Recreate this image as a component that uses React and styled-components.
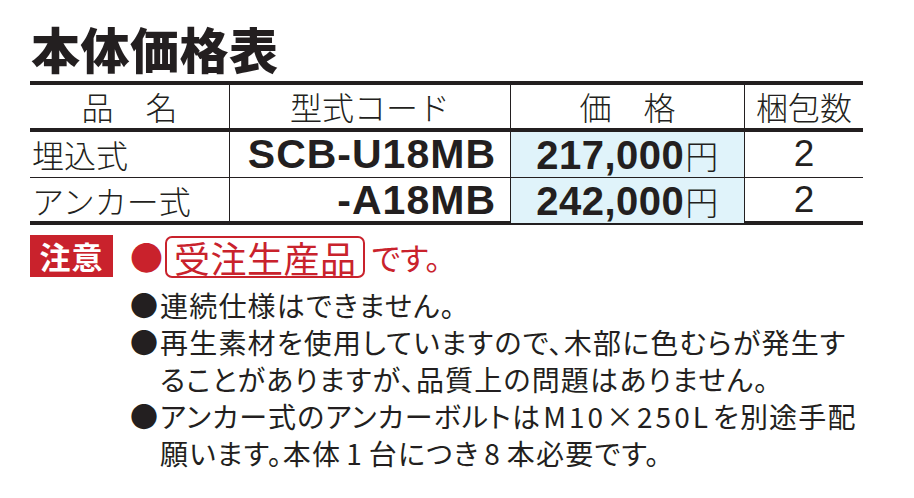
import React from "react";
import styled, { createGlobalStyle } from "styled-components";

const GlobalStyle = createGlobalStyle`
  html, body { margin: 0; padding: 0; background: #ffffff; }
  body {
    font-family: "Noto Sans CJK JP", "Noto Sans", sans-serif;
    color: #231f20;
  }
`;

const INK = "#231f20";
const RED = "#c9222c";

const Page = styled.div`
  width: 914px;
  height: 498px;
  box-sizing: border-box;
  padding: 22px 0 0 30px;
  overflow: hidden;
`;

const Title = styled.h1`
  margin: 0 0 0 1px;
  font-size: 49px;
  line-height: 52px;
  font-weight: 900;
  letter-spacing: 0.5px;
  color: ${INK};
`;

const Table = styled.div`
  margin-top: 7px;
  width: 833px;
  border-top: 4px solid ${INK};
  border-bottom: 4px solid ${INK};
`;

const Row = styled.div`
  display: grid;
  grid-template-columns: 199px 281px 234px 119px;
  height: ${(p) => p.$h}px;
  border-bottom: ${(p) => p.$rule}px solid ${INK};
  box-sizing: content-box;
`;

const Cell = styled.div`
  box-sizing: border-box;
  display: flex;
  align-items: center;
  justify-content: ${(p) => p.$align || "center"};
  border-left: ${(p) => (p.$first ? "none" : `1px solid ${INK}`)};
  background: ${(p) => (p.$tint ? "#e0f3fa" : "transparent")};
  padding: ${(p) => p.$pad || "0"};
  white-space: nowrap;
`;

const HeadText = styled.span`
  font-size: 32px;
  font-weight: 300;
  line-height: 1.2;
`;

const NameText = styled.span`
  font-size: 32px;
  font-weight: 300;
  line-height: 1.2;
`;

const CodeText = styled.span`
  font-family: "Liberation Sans", Arial, sans-serif;
  font-weight: 700;
  font-size: 41px;
  letter-spacing: 1px;
  line-height: 1.1;
`;

const PriceText = styled.span`
  font-family: "Liberation Sans", Arial, sans-serif;
  font-weight: 700;
  font-size: 40px;
  letter-spacing: 0.5px;
  line-height: 1.1;
  display: flex;
  align-items: baseline;
`;

const Yen = styled.span`
  font-family: "Noto Sans CJK JP", sans-serif;
  font-weight: 300;
  font-size: 33px;
  margin-left: 1px;
`;

const QtyText = styled.span`
  font-family: "Liberation Sans", Arial, sans-serif;
  font-size: 37px;
  line-height: 1.1;
`;

const Notes = styled.div`
  margin-top: 10px;
  display: flex;
  align-items: flex-start;
  gap: 17px;
`;

const Label = styled.div`
  width: 83px;
  height: 42px;
  background: ${RED};
  color: #ffffff;
  font-size: 31px;
  font-weight: 700;
  line-height: 42px;
  text-align: center;
  letter-spacing: 1px;
`;

const NoteBody = styled.div`
  display: flex;
  flex-direction: column;
`;

const Headline = styled.div`
  display: flex;
  align-items: center;
  height: 43px;
`;

const RedDot = styled.span`
  color: ${RED};
  font-size: 33px;
  line-height: 1;
  width: 35px;
`;

const Stamp = styled.span`
  box-sizing: border-box;
  height: 42px;
  padding: 0 6px 0 7px;
  border: 2px solid ${RED};
  border-radius: 7px;
  color: ${RED};
  font-size: 36px;
  line-height: 38px;
  letter-spacing: 0.5px;
`;

const RedText = styled.span`
  color: ${RED};
  font-size: 31px;
  line-height: 1;
  margin-left: 7px;
  font-feature-settings: "palt";
`;

const List = styled.div`
  margin-top: 9px;
  display: flex;
  flex-direction: column;
`;

const Item = styled.div`
  display: grid;
  grid-template-columns: 30px auto;
  font-size: 28px;
  line-height: 37px;
  white-space: nowrap;
`;

const Bullet = styled.span`
  color: ${INK};
`;

const ItemText = styled.span`
  font-feature-settings: "palt";
  letter-spacing: 1.2px;
  color: ${INK};
`;

const Latin = styled.span`
  letter-spacing: ${(p) => p.$track || 2}px;
  padding: 0 ${(p) => p.$pad ?? 5}px;
`;

const rows = [
  { name: "埋込式", code: "SCB-U18MB", price: "217,000", qty: "2", h: 45, rule: 1 },
  { name: "アンカー式", code: "-A18MB", price: "242,000", qty: "2", h: 43, rule: 0 },
];

export default function App() {
  return (
    <>
      <GlobalStyle />
      <Page>
        <Title>本体価格表</Title>
        <Table>
          <Row $h={43} $rule={4}>
            <Cell $first>
              <HeadText>品　名</HeadText>
            </Cell>
            <Cell>
              <HeadText>型式コード</HeadText>
            </Cell>
            <Cell>
              <HeadText>価　格</HeadText>
            </Cell>
            <Cell>
              <HeadText>梱包数</HeadText>
            </Cell>
          </Row>
          {rows.map((r) => (
            <Row key={r.code} $h={r.h} $rule={r.rule}>
              <Cell $first $align="flex-start" $pad="0 0 0 2px">
                <NameText>{r.name}</NameText>
              </Cell>
              <Cell $align="flex-end" $pad="0 14px 0 0">
                <CodeText>{r.code}</CodeText>
              </Cell>
              <Cell $tint>
                <PriceText>
                  {r.price}
                  <Yen>円</Yen>
                </PriceText>
              </Cell>
              <Cell>
                <QtyText>{r.qty}</QtyText>
              </Cell>
            </Row>
          ))}
        </Table>
        <Notes>
          <Label>注意</Label>
          <NoteBody>
            <Headline>
              <RedDot>●</RedDot>
              <Stamp>受注生産品</Stamp>
              <RedText>です。</RedText>
            </Headline>
            <List>
              <Item>
                <Bullet>●</Bullet>
                <ItemText>連続仕様はできません。</ItemText>
              </Item>
              <Item>
                <Bullet>●</Bullet>
                <ItemText>
                  再生素材を使用していますので、木部に色むらが発生す
                  <br />
                  ることがありますが、品質上の問題はありません。
                </ItemText>
              </Item>
              <Item>
                <Bullet>●</Bullet>
                <ItemText>
                  アンカー式のアンカーボルトは<Latin $track={3} $pad={2}>M10×250L</Latin>を別途手配
                  <br />
                  願います。本体<Latin>1</Latin>台につき<Latin>8</Latin>本必要です。
                </ItemText>
              </Item>
            </List>
          </NoteBody>
        </Notes>
      </Page>
    </>
  );
}
